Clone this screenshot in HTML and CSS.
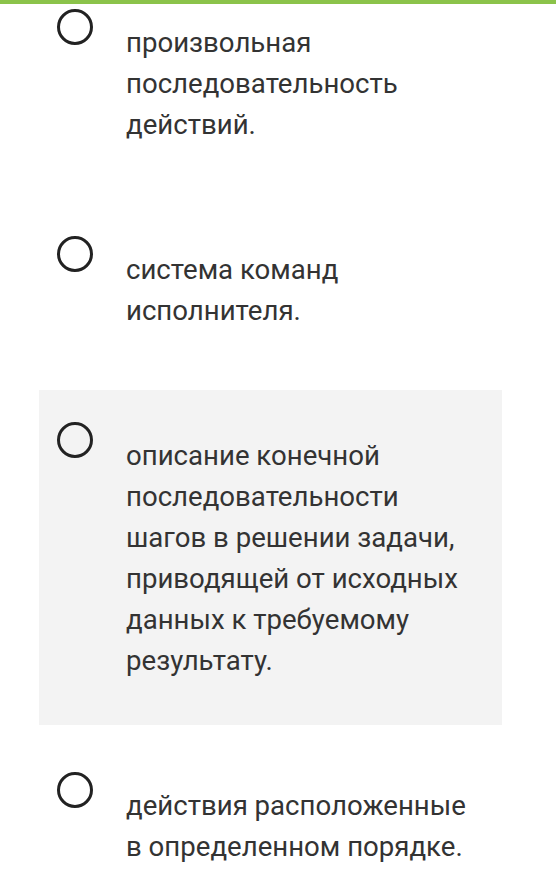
FILE: index.html
```html
<!DOCTYPE html>
<html lang="ru">
<head>
<meta charset="utf-8">
<link rel="stylesheet" href="styles.css">
</head>
<body>
<div class="topbar"></div>
<ul class="options">
  <li class="option">
    <span class="radio"></span>
    <span class="label">произвольная последовательность действий.</span>
  </li>
  <li class="option">
    <span class="radio"></span>
    <span class="label">система команд исполнителя.</span>
  </li>
  <li class="option option--hover">
    <span class="radio"></span>
    <span class="label">описание конечной последовательности шагов в решении задачи, приводящей от исходных данных к требуемому результату.</span>
  </li>
  <li class="option">
    <span class="radio"></span>
    <span class="label">действия расположенные в определенном порядке.</span>
  </li>
</ul>
</body>
</html>
```
FILE: styles.css
```css
html, body {
  margin: 0;
  padding: 0;
  background: #fff;
  overflow: hidden;
}
body {
  font-family: Roboto, "Noto Sans", sans-serif;
  color: #333;
}
.topbar {
  height: 4px;
  background: #8bc34a;
  position: relative;
  z-index: 1;
}
.options {
  list-style: none;
  margin: -27px 0 0 39px;
  padding: 0;
  width: 463px;
  display: flex;
  flex-direction: column;
  gap: 15px;
}
.option {
  display: flex;
  align-items: flex-start;
  padding: 32px 24px 44px 18px;
}
.option--hover {
  background: #f3f3f3;
}
.radio {
  flex: 0 0 auto;
  width: 30px;
  height: 30px;
  border: 3.5px solid #222;
  border-radius: 50%;
  margin-right: 33px;
}
.label {
  margin-top: 13px;
  font-size: 27.6px;
  line-height: 41px;
}
```
